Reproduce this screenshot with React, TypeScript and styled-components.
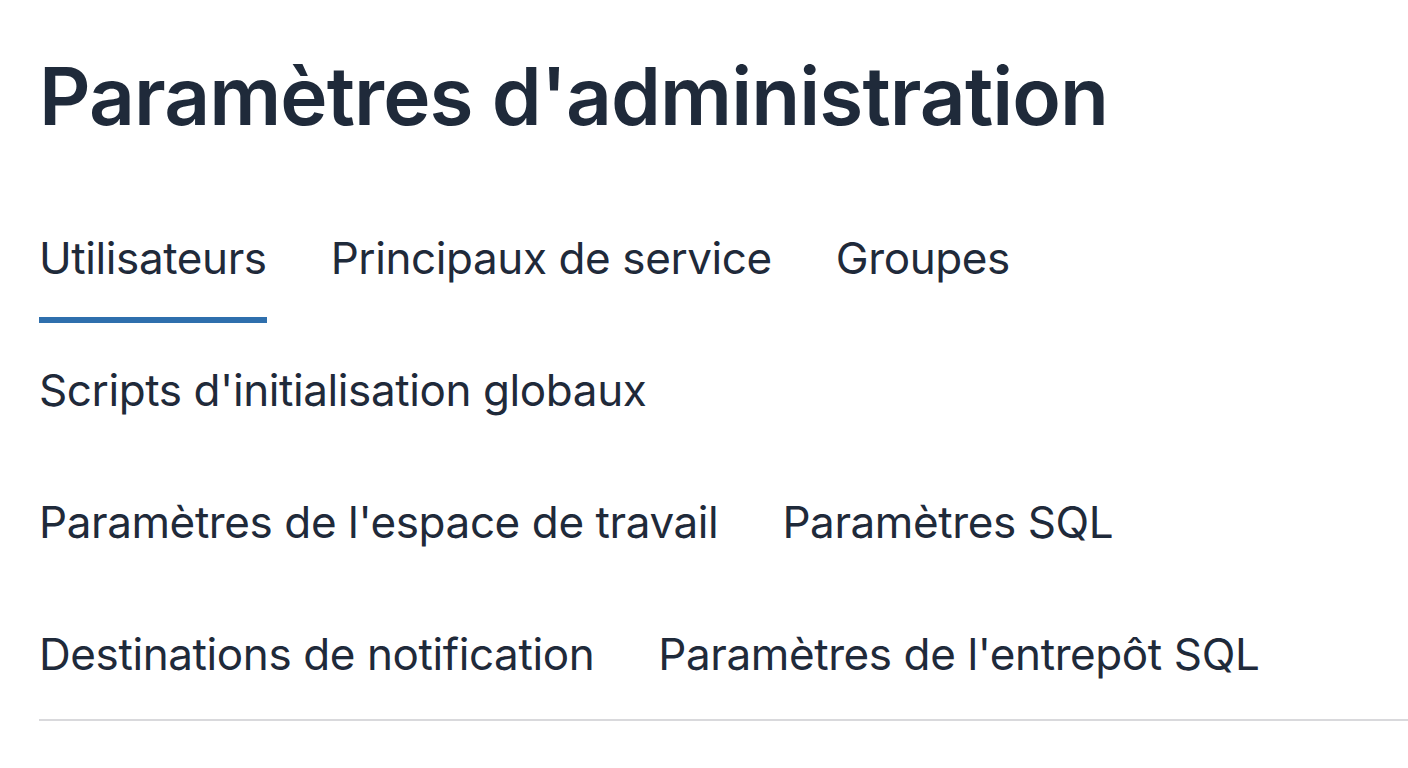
import React from 'react'
import styled, { createGlobalStyle } from 'styled-components'

const GlobalStyle = createGlobalStyle`
  html, body {
    margin: 0;
    padding: 0;
    background: #ffffff;
  }
  body {
    font-family: Inter, "Noto Sans", "Liberation Sans", sans-serif;
    color: #1f2a3a;
  }
`

const Page = styled.div`
  padding: 40px 0 0 39px;
`

const Title = styled.h1`
  margin: 0;
  font-size: 80px;
  line-height: 112px;
  font-weight: 600;
  letter-spacing: -0.9px;
  color: #1f2a3a;
`

const TabList = styled.nav`
  margin-top: 46px;
  padding-right: 70px;
  display: flex;
  flex-wrap: wrap;
  align-items: flex-start;
  column-gap: 64px;
  row-gap: 7px;
  border-bottom: 2px solid #d9d9dc;
`

const Tab = styled.button<{ $active?: boolean }>`
  appearance: none;
  background: none;
  border: none;
  border-bottom: 6px solid ${({ $active }) => ($active ? '#2f6fad' : 'transparent')};
  padding: 33px 0 32px;
  margin: 0;
  font-family: inherit;
  font-size: 44px;
  line-height: 54px;
  font-weight: 400;
  letter-spacing: -0.4px;
  color: #1f2a3a;
  cursor: pointer;
  white-space: nowrap;
`

const tabs = [
  'Utilisateurs',
  'Principaux de service',
  'Groupes',
  "Scripts d'initialisation globaux",
  "Paramètres de l'espace de travail",
  'Paramètres SQL',
  'Destinations de notification',
  "Paramètres de l'entrepôt SQL",
]

const App: React.FC = () => {
  return (
    <Page>
      <GlobalStyle />
      <Title>Paramètres d'administration</Title>
      <TabList>
        {tabs.map((t, i) => (
          <Tab key={t} $active={i === 0}>
            {t}
          </Tab>
        ))}
      </TabList>
    </Page>
  )
}

export default App
